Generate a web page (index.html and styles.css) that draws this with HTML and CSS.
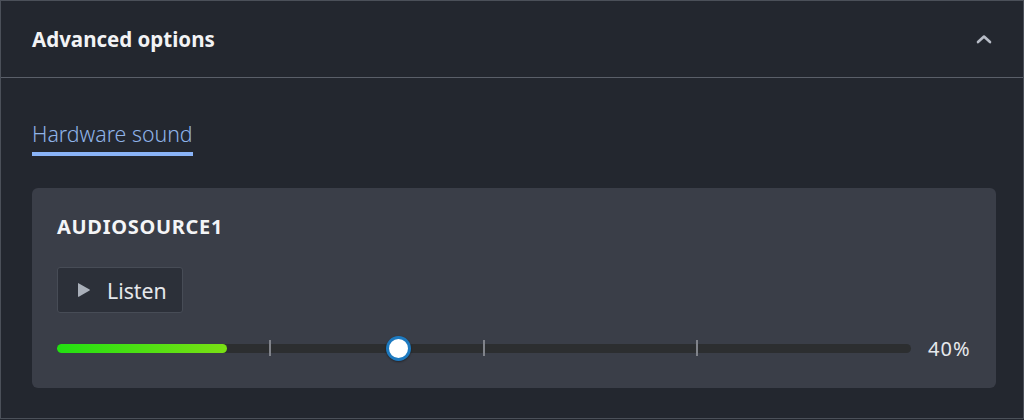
FILE: index.html
```html
<!DOCTYPE html>
<html>
<head>
<meta charset="utf-8">
<link rel="stylesheet" href="styles.css">
</head>
<body>
<section class="panel">
  <header class="panel-head">
    <h2 class="panel-title">Advanced options</h2>
    <svg class="chevron" width="16" height="10" viewBox="0 0 16 10"><path d="M2 8 L8 2.5 L14 8" fill="none" stroke="#b7bcc6" stroke-width="2.6" stroke-linecap="round" stroke-linejoin="round"/></svg>
  </header>
  <div class="panel-body">
    <nav class="tabs"><span class="tab active">Hardware sound</span></nav>
    <div class="card">
      <h3 class="source-name">AUDIOSOURCE1</h3>
      <button class="listen-btn"><svg class="play" width="14" height="16" viewBox="0 0 14 16"><path d="M1.5 1.2 Q1 0.8 1 1.8 L1 14.2 Q1 15.2 1.8 14.7 L12.6 8.6 Q13.4 8 12.6 7.4 Z" fill="#aab0ba"/></svg><span>Listen</span></button>
      <div class="slider-row">
        <div class="slider">
          <div class="track">
            <div class="level" style="width:170px"></div>
            <span class="tick t1"></span>
            <span class="tick t2"></span>
            <span class="tick t3"></span>
            <span class="thumb"></span>
          </div>
        </div>
        <span class="value">40%</span>
      </div>
    </div>
  </div>
</section>
</body>
</html>
```
FILE: styles.css
```css
html, body {
  margin: 0;
  padding: 0;
  background: #23272f;
}
body {
  font-family: "Noto Sans", "Open Sans", sans-serif;
  color: #e8eaee;
  width: 1024px;
  height: 420px;
  overflow: hidden;
}
.panel {
  box-sizing: border-box;
  width: 1024px;
  height: 419px;
  border: 1px solid #4b5059;
  background: #23272f;
}
.panel-head {
  height: 76px;
  border-bottom: 1px solid #5a5f69;
  display: flex;
  align-items: center;
  justify-content: space-between;
  padding: 0 32px 0 31px;
}
.panel-title {
  margin: 0;
  font-size: 20.5px;
  font-weight: 700;
  color: #f2f3f5;
}
.chevron {
  margin-right: -1px;
}
.panel-body {
  padding: 0 27px 0 31px;
}
.tabs {
  display: flex;
  padding-top: 42px;
  height: 36px;
}
.tab {
  font-size: 21.3px;
  font-weight: 300;
  color: #8fb3e8;
  line-height: 28px;
  height: 32px;
  border-bottom: 4px solid #8ab4f8;
  box-sizing: content-box;
}
.card {
  margin-top: 32px;
  width: 964px;
  height: 200px;
  box-sizing: border-box;
  background: #3a3e48;
  border-radius: 6px;
  padding: 26px 25px 0 25px;
}
.source-name {
  margin: 0;
  font-size: 20px;
  font-weight: 700;
  color: #f4f5f7;
  line-height: 26px;
  letter-spacing: 0.7px;
}
.listen-btn {
  margin-top: 27px;
  display: flex;
  align-items: center;
  gap: 16px;
  height: 46px;
  width: 126px;
  padding: 0 0 0 19px;
  box-sizing: border-box;
  background: #2c3039;
  border: 1px solid #474c56;
  border-radius: 3px;
  font-family: inherit;
  font-size: 21.3px;
  color: #e6e8ec;
}
.play {
  flex: none;
  display: block;
}
.slider-row {
  margin-top: 21px;
  display: flex;
  align-items: center;
  height: 28px;
}
.slider {
  width: 854px;
  flex: none;
}
.track {
  position: relative;
  height: 9px;
  border-radius: 5px;
  background: #2c2e30;
}
.level {
  height: 9px;
  border-radius: 5px;
  background: linear-gradient(90deg, #22e012, #7ae014);
}
.tick {
  position: absolute;
  top: -4px;
  width: 2px;
  height: 16px;
  background: #80838a;
}
.t1 { left: 212px; }
.t2 { left: 426px; }
.t3 { left: 639px; }
.thumb {
  position: absolute;
  left: 329px;
  top: -8px;
  width: 19px;
  height: 19px;
  border-radius: 50%;
  background: #ffffff;
  border: 3px solid #1d7ac0;
  box-shadow: 0 1px 2px rgba(0,0,0,0.4);
}
.value {
  margin-left: 17px;
  font-size: 20px;
  letter-spacing: 1px;
  color: #e6e8ec;
}
```
